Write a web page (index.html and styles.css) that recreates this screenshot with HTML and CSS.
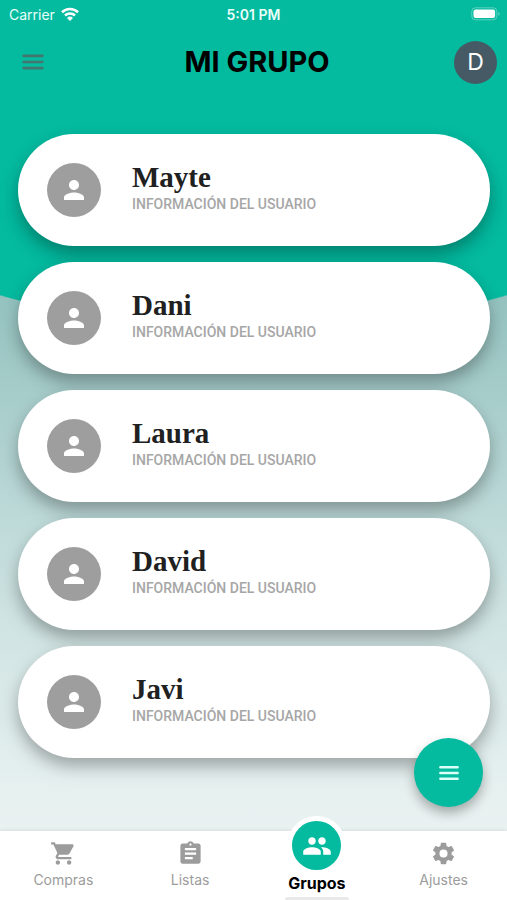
FILE: index.html
```html
<!DOCTYPE html>
<html lang="es">
<head>
<meta charset="utf-8">
<meta name="viewport" content="width=device-width, initial-scale=1">
<title>Mi grupo</title>
<link rel="stylesheet" href="styles.css">
</head>
<body>
<svg class="sprite" aria-hidden="true">
  <symbol id="person" viewBox="0 0 24 24"><path d="M12 12c2.210 0 4-1.790 4-4s-1.790-4-4-4-4 1.790-4 4 1.790 4 4 4zm0 2c-2.670 0-8 1.340-8 4v2h16v-2c0-2.660-5.330-4-8-4z"/></symbol>
  <symbol id="menu" viewBox="0 0 24 24"><path d="M4 6.800h16M4 12h16M4 17.200h16" fill="none" stroke="currentColor" stroke-width="2.300" stroke-linecap="round"/></symbol>
</svg>
<div class="screen">
  <div class="status">
    <div class="carrier">
      <span>Carrier</span>
      <svg class="wifi" viewBox="0 0 18 14"><g fill="none" stroke="currentColor" stroke-width="2.600"><path d="M1 5.200a11.500 11.500 0 0 1 16 0"/><path d="M4 8.500a7.200 7.200 0 0 1 10 0"/></g><path d="M9 14l-3-3.100a4.300 4.300 0 0 1 6 0z" fill="currentColor"/></svg>
    </div>
    <span class="time">5:01 PM</span>
    <svg class="battery" viewBox="0 0 30 14"><rect x=".8" y=".8" width="25" height="12" rx="3.500" fill="none" stroke="currentColor" opacity=".35"/><rect x="2.500" y="2.500" width="21.600" height="8.600" rx="2" fill="currentColor"/><path d="M27.500 5q2 1.800 0 3.800z" fill="currentColor" opacity=".6"/></svg>
  </div>
  <header class="header">
    <button class="menu" aria-label="Abrir menú"><svg viewBox="0 0 24 24"><use href="#menu"/></svg></button>
    <h1>MI GRUPO</h1>
    <button class="avatar" aria-label="Perfil">D</button>
  </header>
  <main>
    <ul class="members">
      <li class="card"><span class="face"><svg viewBox="0 0 24 24"><use href="#person"/></svg></span><div><h2>Mayte</h2><p>INFORMACIÓN DEL USUARIO</p></div></li>
      <li class="card"><span class="face"><svg viewBox="0 0 24 24"><use href="#person"/></svg></span><div><h2>Dani</h2><p>INFORMACIÓN DEL USUARIO</p></div></li>
      <li class="card"><span class="face"><svg viewBox="0 0 24 24"><use href="#person"/></svg></span><div><h2>Laura</h2><p>INFORMACIÓN DEL USUARIO</p></div></li>
      <li class="card"><span class="face"><svg viewBox="0 0 24 24"><use href="#person"/></svg></span><div><h2>David</h2><p>INFORMACIÓN DEL USUARIO</p></div></li>
      <li class="card"><span class="face"><svg viewBox="0 0 24 24"><use href="#person"/></svg></span><div><h2>Javi</h2><p>INFORMACIÓN DEL USUARIO</p></div></li>
    </ul>
  </main>
  <button class="fab" aria-label="Opciones"><svg viewBox="0 0 24 24"><use href="#menu"/></svg></button>
  <nav class="tabs">
    <a class="tab" href="#compras"><svg viewBox="0 0 24 24"><path d="M5 4h15.500l-4.500 8.500H8z"/><path d="M7 18c-1.100 0-1.990.9-1.990 2S5.900 22 7 22s2-.9 2-2-.9-2-2-2zM1 2v2h2l3.600 7.590-1.350 2.450c-.16.28-.25.61-.25.96 0 1.100.9 2 2 2h12v-2H7.420c-.14 0-.25-.11-.25-.25l.03-.12.9-1.630h7.450c.75 0 1.410-.41 1.750-1.030l3.580-6.490c.08-.14.12-.31.12-.48 0-.55-.45-1-1-1H5.210l-.94-2H1zm16 16c-1.100 0-1.990.9-1.990 2s.89 2 1.990 2 2-.9 2-2-.9-2-2-2z"/></svg>Compras</a>
    <a class="tab" href="#listas"><svg viewBox="0 0 24 24"><path d="M19 3h-4.180C14.400 1.840 13.300 1 12 1s-2.400.84-2.820 2H5c-1.100 0-2 .9-2 2v14c0 1.100.9 2 2 2h14c1.100 0 2-.9 2-2V5c0-1.100-.9-2-2-2zm-7 0c.55 0 1 .45 1 1s-.45 1-1 1-1-.45-1-1 .45-1 1-1zm2 14H7v-2h7v2zm3-4H7v-2h10v2zm0-4H7V7h10v2z"/></svg>Listas</a>
    <a class="tab active" href="#grupos" aria-current="page"><span class="bubble"><svg viewBox="0 0 24 24"><path d="M16 11c1.660 0 2.990-1.340 2.990-3S17.660 5 16 5s-3 1.340-3 3 1.340 3 3 3zm-8 0c1.660 0 2.990-1.340 2.990-3S9.660 5 8 5 5 6.340 5 8s1.340 3 3 3zm0 2c-2.330 0-7 1.170-7 3.500V19h14v-2.500C15 14.170 10.330 13 8 13zm8 0c-.29 0-.62.02-.97.05C16.190 13.890 17 15.020 17 16.500V19h6v-2.500c0-2.330-4.670-3.500-7-3.500z"/></svg></span>Grupos</a>
    <a class="tab" href="#ajustes"><svg viewBox="0 0 24 24"><path d="M19.140 12.940c.04-.3.06-.61.06-.94s-.02-.64-.07-.94l2.030-1.580c.18-.14.23-.41.12-.61l-1.920-3.320c-.12-.22-.37-.29-.59-.22l-2.390.96c-.5-.38-1.030-.7-1.620-.94l-.36-2.540A.48.480 0 0 0 13.920 2.400h-3.840c-.24 0-.43.17-.47.41l-.36 2.540c-.59.24-1.130.57-1.620.94l-2.390-.96c-.22-.08-.47 0-.59.22L2.740 8.870c-.12.21-.08.47.12.61l2.030 1.580c-.05.3-.09.63-.09.94s.02.64.07.94l-2.030 1.580c-.18.14-.23.41-.12.61l1.920 3.320c.12.22.37.29.59.22l2.390-.96c.5.38 1.030.7 1.620.94l.36 2.540c.05.24.24.41.48.41h3.840c.24 0 .44-.17.47-.41l.36-2.540c.59-.24 1.130-.56 1.620-.94l2.390.96c.22.08.47 0 .59-.22l1.920-3.320c.12-.22.07-.47-.12-.61l-2.010-1.580zM12 15.600A3.600 3.600 0 1 1 12 8.400a3.600 3.600 0 0 1 0 7.200z"/></svg>Ajustes</a>
  </nav>
</div>
</body>
</html>
```
FILE: styles.css
```css
* { box-sizing: border-box; }
body, h1, h2, p, ul { margin: 0; padding: 0; }
body { font-family: Inter, "Liberation Sans", sans-serif; }
button { border: 0; padding: 0; font: inherit; cursor: pointer; }
svg { display: block; fill: currentColor; }
.sprite { position: absolute; width: 0; height: 0; }

.screen {
  position: relative;
  min-height: 100vh;
  display: flex;
  flex-direction: column;
  overflow: hidden;
  background:
    radial-gradient(ellipse 70% 100px at 50% 226px, #04ba9f 99%, transparent 100%) 0 0 / 100% 400px no-repeat,
    linear-gradient(#04ba9f, #04ba9f) 0 0 / 100% 226px no-repeat,
    linear-gradient(#95c3c0 300px, #cce2e1 600px, #e7f1f0 800px, #edf3f3);
}

.status {
  display: grid;
  grid-template-columns: 1fr auto 1fr;
  align-items: center;
  height: 28px;
  padding: 0 6px;
  font-size: 14px;
  color: #e9fffa;
}
.carrier { display: flex; align-items: center; gap: 6px; padding-left: 3px; }
.wifi { width: 18px; height: 14px; color: #fff; }
.time { font-size: 14px; font-weight: 600; }
.battery { width: 30px; height: 14px; justify-self: end; color: #fff; }

.header {
  display: grid;
  grid-template-columns: 1fr auto 1fr;
  align-items: center;
  height: 68px;
  padding: 0 10px 0 17px;
}
.header h1 { font-size: 29px; line-height: 32px; font-weight: 700; color: #000; }
.menu { width: 32px; background: none; color: #44766f; }
.menu svg { width: 32px; height: 28px; }
.avatar {
  justify-self: end;
  width: 43px;
  height: 43px;
  border-radius: 50%;
  background: #455a64;
  color: #fff;
  font-size: 23px;
}

main { flex: 1; padding: 38px 17px 72px 18px; }
.members { display: grid; gap: 16px; list-style: none; }
.card {
  display: flex;
  align-items: center;
  gap: 31px;
  padding: 29px;
  border-radius: 56px;
  background: #fff;
  box-shadow: 0 8px 14px rgb(0 0 0 / 22%), 0 10px 24px rgb(0 0 0 / 10%);
}
.face {
  display: grid;
  place-items: center;
  width: 54px;
  height: 54px;
  border-radius: 50%;
  background: #9e9e9e;
  color: #fff;
}
.face svg { width: 30px; height: 30px; }
.card h2 {
  font: 700 29px/28px "Liberation Serif", serif;
  color: #202020;
}
.card p {
  font: 500 14px/26px Roboto, "Liberation Sans", sans-serif;
  color: #a6a6a6;
}

.fab {
  position: absolute;
  right: 24px;
  bottom: 93px;
  display: grid;
  place-items: center;
  width: 69px;
  height: 69px;
  border-radius: 50%;
  background: #04ba9f;
  color: #d9fff7;
  box-shadow: 0 6px 12px rgb(0 0 0 / 30%);
}
.fab svg { width: 28px; height: 26px; }

.tabs {
  display: grid;
  grid-template: 69px / repeat(4, 1fr);
  background: #fff;
  box-shadow: 0 -1px 3px rgb(0 0 0 / 8%);
}
.tab {
  display: flex;
  flex-direction: column;
  align-items: center;
  gap: 4px;
  padding-top: 9px;
  font-size: 14px;
  line-height: 18px;
  color: #9c9c9c;
  text-decoration: none;
}
.tab svg { width: 27px; height: 27px; }
.tab.active {
  position: relative;
  justify-content: flex-end;
  padding: 0 0 8px;
  font-size: 16px;
  font-weight: 700;
  color: #000;
}
.tab.active::after {
  content: "";
  position: absolute;
  bottom: 0;
  width: 64px;
  height: 3px;
  background: #e9e9e9;
  border-radius: 3px 3px 0 0;
}
.bubble {
  display: grid;
  place-items: center;
  flex: none;
  width: 49px;
  height: 49px;
  border-radius: 50%;
  background: #04ba9f;
  color: #fff;
  box-shadow: 0 0 0 5px #fff;
}
.tab .bubble svg { width: 30px; height: 30px; }
```
